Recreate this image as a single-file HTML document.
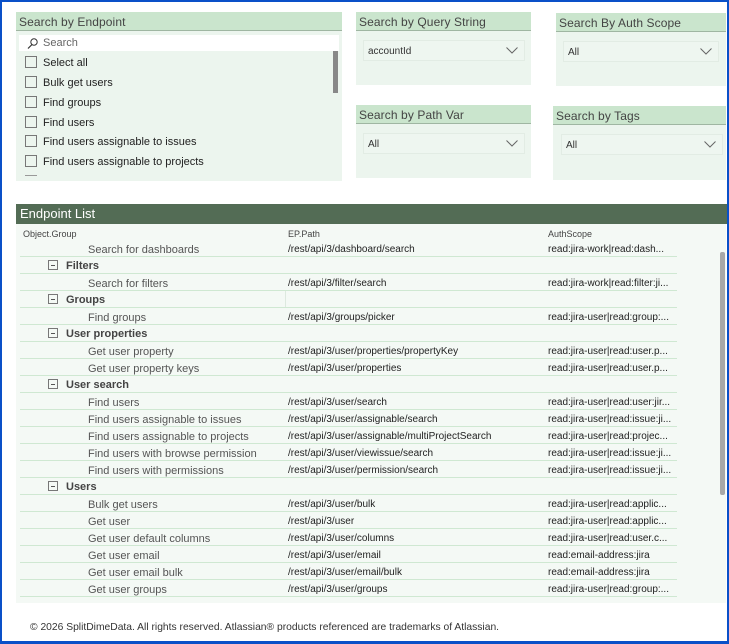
<!DOCTYPE html>
<html><head><meta charset="utf-8"><style>
*{margin:0;padding:0;box-sizing:border-box}
body{width:729px;height:644px;position:relative;background:#fff;font-family:"Liberation Sans",sans-serif;overflow:hidden}
.frame{position:absolute;left:0;top:0;width:729px;height:644px;border:2px solid #0a50c8;border-bottom-width:3px}
.card{position:absolute;background:#ecf5ee}
.hd{height:19px;background:#cae5cd;border-bottom:1.5px solid #9fb6a2;font-size:12px;color:#444;padding:3px 0 0 3px;letter-spacing:0.1px}
.dd{position:absolute;background:#eef6f0;border:1px solid #e2ece4;height:21px;font-size:10px;color:#333;padding:5px 0 0 4px}
.dd svg{position:absolute;right:6px;top:6px}
.item{position:absolute;left:9px;font-size:11px;color:#222;height:14px}
.item i{display:inline-block;width:12px;height:12px;border:1px solid #777;vertical-align:-2px;margin-right:6px}
.row{position:absolute;left:20px;width:657px;height:17px;border-bottom:1.5px solid #cfe8d2;font-size:11px;color:#555}
.row span{position:absolute;top:4px;white-space:nowrap}
.c1{left:68px}.c2{left:268px;color:#222;font-size:10px}.c3{left:528px;color:#222;font-size:10px}
.row span.g{font-weight:bold;color:#444;left:28px;top:3px}
.g b{display:inline-block;width:10px;height:10px;border:1px solid #777;margin-right:8px;vertical-align:-1px;position:relative}
.g b:after{content:"";position:absolute;left:2px;top:4px;width:4px;height:1px;background:#555}
</style></head><body>
<div class="frame"></div>

<div class="card" style="left:16px;top:12px;width:326px;height:169px">
<div class="hd">Search by Endpoint</div>
<div style="position:absolute;left:3px;top:23px;width:320px;height:16px;background:#fff;font-size:11px;color:#666;padding:2px 0 0 24px">Search
<svg style="position:absolute;left:8px;top:3px" width="11" height="11"><circle cx="7" cy="4" r="3.2" fill="none" stroke="#333" stroke-width="1"/><line x1="5" y1="6.5" x2="1" y2="10.5" stroke="#333" stroke-width="1.2"/></svg></div>
<div style="position:absolute;left:317px;top:39px;width:5px;height:42px;background:#888"></div>
<div class="item" style="top:44px"><i></i>Select all</div>
<div class="item" style="top:64px"><i></i>Bulk get users</div>
<div class="item" style="top:84px"><i></i>Find groups</div>
<div class="item" style="top:104px"><i></i>Find users</div>
<div class="item" style="top:123px"><i></i>Find users assignable to issues</div>
<div class="item" style="top:143px"><i></i>Find users assignable to projects</div>
<div style="position:absolute;left:9px;top:163px;width:12px;height:2px;border-top:1px solid #999"></div>
</div>

<div class="card" style="left:356px;top:12px;width:175px;height:73px"><div class="hd">Search by Query String</div>
<div class="dd" style="left:7px;top:28px;width:162px">accountId<svg width="12" height="7"><path d="M0.5 0.5 L6 6 L11.5 0.5" fill="none" stroke="#666"/></svg></div></div>
<div class="card" style="left:556px;top:13px;width:170px;height:73px"><div class="hd">Search By Auth Scope</div>
<div class="dd" style="left:7px;top:28px;width:156px">All<svg width="12" height="7"><path d="M0.5 0.5 L6 6 L11.5 0.5" fill="none" stroke="#666"/></svg></div></div>
<div class="card" style="left:356px;top:105px;width:175px;height:73px"><div class="hd">Search by Path Var</div>
<div class="dd" style="left:7px;top:28px;width:162px">All<svg width="12" height="7"><path d="M0.5 0.5 L6 6 L11.5 0.5" fill="none" stroke="#666"/></svg></div></div>
<div class="card" style="left:553px;top:106px;width:173px;height:74px"><div class="hd">Search by Tags</div>
<div class="dd" style="left:8px;top:28px;width:162px">All<svg width="12" height="7"><path d="M0.5 0.5 L6 6 L11.5 0.5" fill="none" stroke="#666"/></svg></div></div>

<div style="position:absolute;left:16px;top:204px;width:711px;height:20px;background:#536c55;color:#fff;font-size:13px;padding:2px 0 0 4px">Endpoint List</div>
<div style="position:absolute;left:16px;top:224px;width:710px;height:379px;background:#f4f9f5"></div>
<div style="position:absolute;left:23px;top:229px;font-size:9px;color:#444">Object.Group</div>
<div style="position:absolute;left:288px;top:229px;font-size:9px;color:#444">EP.Path</div>
<div style="position:absolute;left:548px;top:229px;font-size:9px;color:#444">AuthScope</div>
<div style="position:absolute;left:720px;top:252px;width:5px;height:243px;background:#a8a8a8;border-radius:2px"></div>
<div style="position:absolute;left:285px;top:291px;width:1px;height:17px;background:#dde9df"></div>

<div class="row" style="top:240px"><span class="c1">Search for dashboards</span><span class="c2">/rest/api/3/dashboard/search</span><span class="c3">read:jira-work|read:dash...</span></div>
<div class="row" style="top:257px"><span class="g"><b></b>Filters</span></div>
<div class="row" style="top:274px"><span class="c1">Search for filters</span><span class="c2">/rest/api/3/filter/search</span><span class="c3">read:jira-work|read:filter:ji...</span></div>
<div class="row" style="top:291px"><span class="g"><b></b>Groups</span></div>
<div class="row" style="top:308px"><span class="c1">Find groups</span><span class="c2">/rest/api/3/groups/picker</span><span class="c3">read:jira-user|read:group:...</span></div>
<div class="row" style="top:325px"><span class="g"><b></b>User properties</span></div>
<div class="row" style="top:342px"><span class="c1">Get user property</span><span class="c2">/rest/api/3/user/properties/propertyKey</span><span class="c3">read:jira-user|read:user.p...</span></div>
<div class="row" style="top:359px"><span class="c1">Get user property keys</span><span class="c2">/rest/api/3/user/properties</span><span class="c3">read:jira-user|read:user.p...</span></div>
<div class="row" style="top:376px"><span class="g"><b></b>User search</span></div>
<div class="row" style="top:393px"><span class="c1">Find users</span><span class="c2">/rest/api/3/user/search</span><span class="c3">read:jira-user|read:user:jir...</span></div>
<div class="row" style="top:410px"><span class="c1">Find users assignable to issues</span><span class="c2">/rest/api/3/user/assignable/search</span><span class="c3">read:jira-user|read:issue:ji...</span></div>
<div class="row" style="top:427px"><span class="c1">Find users assignable to projects</span><span class="c2">/rest/api/3/user/assignable/multiProjectSearch</span><span class="c3">read:jira-user|read:projec...</span></div>
<div class="row" style="top:444px"><span class="c1">Find users with browse permission</span><span class="c2">/rest/api/3/user/viewissue/search</span><span class="c3">read:jira-user|read:issue:ji...</span></div>
<div class="row" style="top:461px"><span class="c1">Find users with permissions</span><span class="c2">/rest/api/3/user/permission/search</span><span class="c3">read:jira-user|read:issue:ji...</span></div>
<div class="row" style="top:478px"><span class="g"><b></b>Users</span></div>
<div class="row" style="top:495px"><span class="c1">Bulk get users</span><span class="c2">/rest/api/3/user/bulk</span><span class="c3">read:jira-user|read:applic...</span></div>
<div class="row" style="top:512px"><span class="c1">Get user</span><span class="c2">/rest/api/3/user</span><span class="c3">read:jira-user|read:applic...</span></div>
<div class="row" style="top:529px"><span class="c1">Get user default columns</span><span class="c2">/rest/api/3/user/columns</span><span class="c3">read:jira-user|read:user.c...</span></div>
<div class="row" style="top:546px"><span class="c1">Get user email</span><span class="c2">/rest/api/3/user/email</span><span class="c3">read:email-address:jira</span></div>
<div class="row" style="top:563px"><span class="c1">Get user email bulk</span><span class="c2">/rest/api/3/user/email/bulk</span><span class="c3">read:email-address:jira</span></div>
<div class="row" style="top:580px"><span class="c1">Get user groups</span><span class="c2">/rest/api/3/user/groups</span><span class="c3">read:jira-user|read:group:...</span></div>

<div style="position:absolute;left:30px;top:622px;font-size:10.3px;color:#333">© 2026 SplitDimeData. All rights reserved. Atlassian® products referenced are trademarks of Atlassian.</div>
</body></html>
